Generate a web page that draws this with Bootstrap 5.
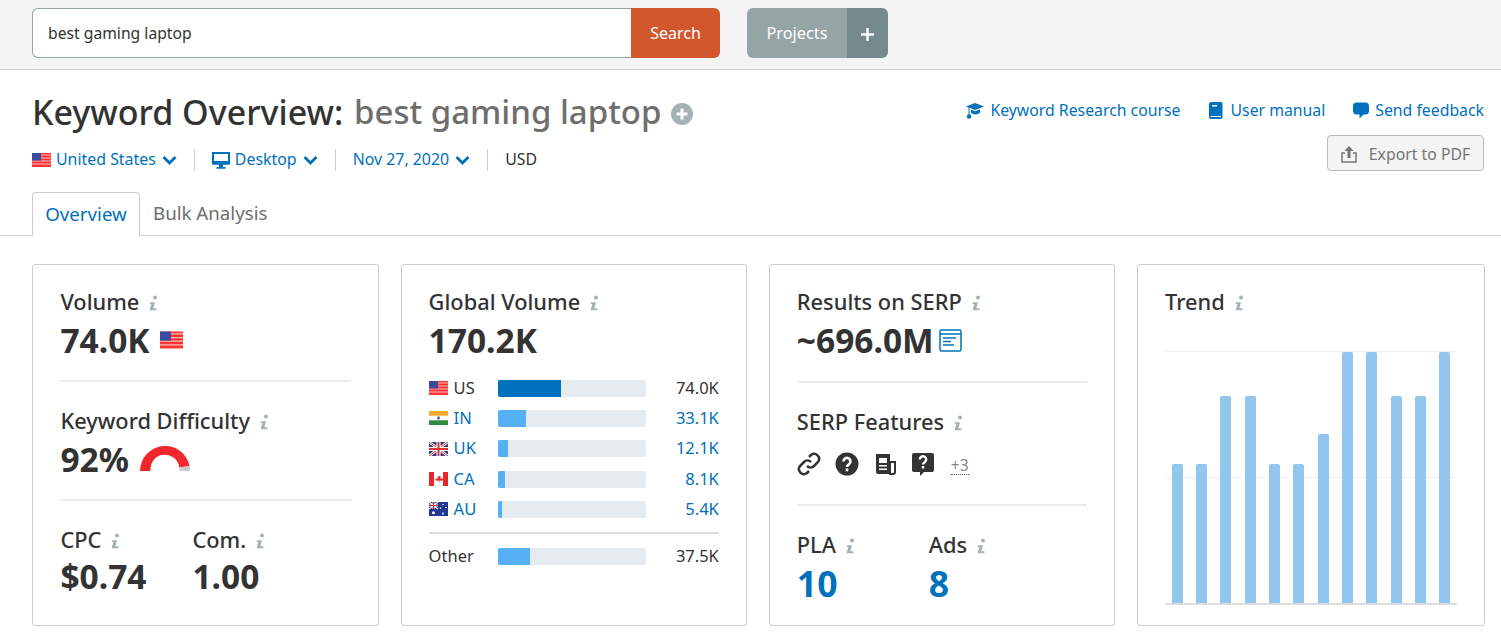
<!DOCTYPE html>
<html lang="en"><head><meta charset="utf-8"><title>Keyword Overview</title>
<link href="https://cdn.jsdelivr.net/npm/bootstrap@5.3.0/dist/css/bootstrap.min.css" rel="stylesheet">
<style>
body{font-family:"Noto Sans",sans-serif;color:#333;background:#fff;overflow:hidden;font-size:16px}
a{color:#0071bc;text-decoration:none}
.topbar{height:70px;background:#f4f4f4;border-bottom:1px solid #ccc;padding:8px 32px}
.searchbox{width:688px;height:50px}
.searchbox .search-in{width:599px;height:50px;border:1px solid #95a5a6;border-right:0;border-radius:6px 0 0 6px;padding:0 15px;font-size:15.7px;color:#333;background:#fff;line-height:48px}
.searchbox .search-go{width:89px;height:50px;background:#d2572c;color:#fff;border:0;border-radius:0 6px 6px 0;font-size:16px;padding:0}
.proj{margin-left:27px;height:50px}
.proj-a{width:100px;height:50px;background:#95a5a6;color:#fff;border:0;border-radius:6px 0 0 6px;font-size:16.3px;padding:0}
.proj-b{width:41px;height:50px;background:#748a8f;border:0;border-radius:0 6px 6px 0;padding:0}
.headwrap{padding:0 17px 0 32px;height:122px}
.pagetitle{font-size:34px;font-weight:500;line-height:40px;margin:22px 0 0;white-space:nowrap;color:#333}
.pagetitle .kw{color:#6e6e6e;margin-left:2px;font-size:33px}
.pagetitle svg{margin:4px 0 0 10px}
.filters{margin-top:16px;height:24px;font-size:15.9px}
.filters .sep{width:1px;height:22px;background:#ccc;margin:0 17px}
.filters .chv{margin-left:6px}
.filters .lead-ico{margin-right:5px}
.toplinks{padding-top:29px;font-size:15.8px;gap:28px;line-height:22px}
.toplinks a{gap:6px}
.toplinks a.wide{gap:8px}
.exportbtn{margin-top:14px;height:36px;width:157px;background:#f4f4f4;border:1px solid #b5bcbd;border-radius:4px;color:#757575;font-size:15.8px;line-height:36px;padding:1px 0 0}
.tabstrip{height:44px;border-bottom:1px solid #ccc;padding-left:32px}
.tabon{height:44px;width:108px;border:1px solid #ccc;border-bottom:0;border-radius:4px 4px 0 0;background:#fff;color:#0071bc;font-size:18.7px;line-height:41px;text-align:center}
.taboff{font-size:18.7px;color:#6e6e6e;line-height:41px;margin-left:13px}
.cardgrid{display:grid;grid-template-columns:repeat(4,1fr);gap:22px;padding:28px 16px 0 32.4px}
.metric{height:362px;border:1px solid #ccc;border-radius:3px;padding:25px 27px 0;background:#fff}
.mlabel{font-size:21.8px;line-height:24px;font-weight:500;color:#333;white-space:nowrap}
.mvalue{font-size:33.5px;line-height:40px;margin-top:6px;font-weight:700;color:#333;white-space:nowrap}
.mvalue.tight{margin-top:4px}
.hrule{height:2px;background:#e9edee;margin-top:20px}
.hrule.first{margin-top:21px}
.hrule.serp{margin-top:28px}
.afterrule{margin-top:27px}
.inf{width:9px;height:16px;margin-left:10px;vertical-align:-1px}
.flagbig{margin-left:10px}
.pagegauge{margin:0 0 8px 11px}
.serpico{margin-left:5px}
.cty{height:30.3px;font-size:16.5px}
.ctylist{margin-top:13px}
.cty .flg{width:19px;height:14px;margin-right:6px;flex:none}
.cty .cc{width:44px}
.cty .othr{width:69px}
.barbg{width:148px;height:17px;background:#e5ebee;border-radius:2px;overflow:hidden;flex:none}
.barfg{height:100%;background:#55b1f3}
.barfg.dark{background:#0071bc}
.num{flex:1;text-align:right}
.otherrule{height:2px;background:#ddd;margin:8px 0 7px}
.trendbox{height:254px;margin-top:37px;border-top:1px solid #f0f0f0;border-bottom:2px solid #ddd;background:linear-gradient(#eee,#eee) 0 50%/100% 1px no-repeat}
.tcol{width:24.33px;flex:none;display:flex;justify-content:center;align-items:flex-end;height:100%}
.tbar{width:11px;background:#92c6ee;border-radius:2px 2px 0 0}
.iconrow{margin-top:18px;gap:14px}
.plus3{font-size:15.5px;color:#8a8a8a;border-bottom:1px dotted #555;line-height:17px;margin:4px 0 0 2px}
.sico{width:24px;height:24px}
.bignum{font-size:35.5px;line-height:40px;margin-top:6px;font-weight:700;color:#0071bc}
.halfcol{width:132px}
</style></head><body>
<svg width="0" height="0" class="d-block"><defs>
<symbol id="i" viewBox="0 0 9 16"><circle cx="6" cy="2.5" r="2" fill="#a5b2b5"/><path d="M1 7.2h5l-1.6 6h3v2H.6l1.700-6.200H.6z" fill="#a5b2b5"/></symbol>
<symbol id="us" viewBox="0 0 19 14"><rect width="19" height="14" fill="#f33"/><path d="M0 2h19M0 5h19M0 8h19M0 11h19" stroke="#fbb" stroke-width="1"/><rect width="9" height="7.5" fill="#3b4b9e"/></symbol>
<symbol id="in" viewBox="0 0 19 14"><rect width="19" height="14" fill="#fff"/><rect width="19" height="4.7" fill="#f6a72d"/><rect y="9.3" width="19" height="4.7" fill="#2c8a3c"/><circle cx="9.5" cy="7" r="1.7" fill="#5a7fb0"/></symbol>
<symbol id="uk" viewBox="0 0 19 14"><rect width="19" height="14" fill="#2d3f86"/><path d="M0 0l19 14M19 0L0 14" stroke="#fff" stroke-width="2.6"/><path d="M0 0l19 14M19 0L0 14" stroke="#d33" stroke-width="1"/><path d="M9.5 0v14M0 7h19" stroke="#fff" stroke-width="4"/><path d="M9.5 0v14M0 7h19" stroke="#d33" stroke-width="2"/></symbol>
<symbol id="ca" viewBox="0 0 19 14"><rect width="19" height="14" fill="#fff"/><rect width="5" height="14" fill="#e8262b"/><rect x="14" width="5" height="14" fill="#e8262b"/><path d="M9.5 2.500l1 2 1.200-.5-.4 2.500 1.400-.6.3 1 1.300-.2-.9 2-3-.3.1 2h-.6l.1-2-3 .3-.9-2 1.300.2.3-1 1.400.6-.4-2.500 1.200.5z" fill="#e8262b"/></symbol>
<symbol id="au" viewBox="0 0 19 14"><rect width="19" height="14" fill="#1d3a8f"/><path d="M0 0l9 7M9 0L0 7" stroke="#fff" stroke-width="1.2"/><path d="M4.5 0v7M0 3.500h9" stroke="#fff" stroke-width="2"/><path d="M4.5 0v7M0 3.500h9" stroke="#d33" stroke-width="1"/><g fill="#fff"><circle cx="4.5" cy="10.8" r="1.5"/><circle cx="14" cy="2.5" r=".8"/><circle cx="14" cy="11.5" r=".9"/><circle cx="11.5" cy="6" r=".8"/><circle cx="17" cy="5.5" r=".8"/></g></symbol>
<symbol id="chev" viewBox="0 0 15 10"><path d="M1.5 2l6 6 6-6" fill="none" stroke="#0071bc" stroke-width="2.8"/></symbol>
</defs></svg>

<header class="topbar d-flex align-items-start">
  <div class="searchbox d-flex"><div class="search-in">best gaming laptop</div><button class="search-go">Search</button></div>
  <div class="proj d-flex"><button class="proj-a">Projects</button><button class="proj-b" aria-label="Add"><svg width="13" height="13" viewBox="0 0 13 13"><path d="M6.5 0v13M0 6.500h13" stroke="#fff" stroke-width="2.4"/></svg></button></div>
</header>

<section class="headwrap d-flex justify-content-between">
  <div>
    <h1 class="pagetitle d-flex align-items-center">Keyword Overview:&nbsp;<span class="kw">best gaming laptop</span>
      <svg width="22" height="22" viewBox="0 0 22 22"><circle cx="11" cy="11" r="11" fill="#a5b2b5"/><path d="M11 5.500v11M5.500 11h11" stroke="#fff" stroke-width="3"/></svg></h1>
    <div class="filters d-flex align-items-center">
      <svg width="19" height="14" class="lead-ico"><use href="#us"/></svg><a href="#">United States</a><svg width="15" height="10" class="chv"><use href="#chev"/></svg><span class="sep"></span>
      <svg width="18" height="17" viewBox="0 0 18 17" class="lead-ico"><path d="M1 1h16v10.500H1z" fill="none" stroke="#0071bc" stroke-width="2"/><path d="M1 9h16v3.500H1zM7 12h4v3h2.500v1.800h-9V15H7z" fill="#0071bc"/></svg><a href="#">Desktop</a><svg width="15" height="10" class="chv"><use href="#chev"/></svg><span class="sep"></span>
      <a href="#">Nov 27, 2020</a><svg width="15" height="10" class="chv"><use href="#chev"/></svg><span class="sep"></span>
      <span>USD</span>
    </div>
  </div>
  <div class="d-flex flex-column align-items-end">
    <div class="toplinks d-flex">
      <a href="#" class="d-flex align-items-center"><svg width="18" height="17" viewBox="0 0 18 17"><path d="M9 1l9 3.500L9 8 3.500 5.800V13H2.500V5.400L0 4.500z" fill="#0071bc"/><path d="M5 7.500l4 1.800 5-2v3.500c-3 2.300-6 2.300-9 0z" fill="#0071bc"/><circle cx="3" cy="14.500" r="2.200" fill="#0071bc"/></svg>Keyword Research course</a>
      <a href="#" class="d-flex align-items-center wide"><svg width="14" height="17" viewBox="0 0 14 17"><path d="M2 0h10a1.500 1.500 0 0 1 1.500 1.500V15a2 2 0 0 1-2 2H2a2 2 0 0 1-2-2V2a2 2 0 0 1 2-2z" fill="#0071bc"/><path d="M3 3h5v1.500H3z" fill="#fff"/><path d="M1.500 14.500h10.500" stroke="#fff" stroke-width="1"/></svg>User manual</a>
      <a href="#" class="d-flex align-items-center"><svg width="16" height="17" viewBox="0 0 16 17"><path d="M4 .5h8A3.700 3.700 0 0 1 16 4v5a3.700 3.700 0 0 1-4 3.500h-1.500L6.500 16.500v-4H4A3.700 3.700 0 0 1 0 9V4A3.700 3.700 0 0 1 4 .5z" fill="#0071bc"/></svg>Send feedback</a>
    </div>
    <button class="exportbtn d-flex align-items-center justify-content-center gap-2"><svg width="16" height="18" viewBox="0 0 16 18"><path d="M4 8H1v9h14V8h-3" fill="none" stroke="#757575" stroke-width="1.500"/><path d="M8 1L3.500 6h3v7h3V6h3z" fill="#757575"/></svg><span class="ms-1">Export to PDF</span></button>
  </div>
</section>

<nav class="tabstrip d-flex"><div class="tabon">Overview</div><div class="taboff">Bulk Analysis</div></nav>

<main class="cardgrid">
  <article class="metric">
    <div class="mlabel">Volume<svg class="inf"><use href="#i"/></svg></div>
    <div class="mvalue d-flex align-items-center">74.0K<svg width="23" height="18" class="flagbig"><use href="#us"/></svg></div>
    <div class="hrule"></div>
    <div class="mlabel afterrule">Keyword Difficulty<svg class="inf"><use href="#i"/></svg></div>
    <div class="mvalue d-flex align-items-end">92%<svg width="50" height="25" viewBox="0 0 50 25" class="pagegauge"><path d="M0 25A25 25 0 0 1 49.500 20L39.300 21.500A14.500 14.500 0 0 0 10.500 25z" fill="#f0282d"/><path d="M49.500 20A25 25 0 0 1 50 25H39.500A14.500 14.500 0 0 0 39.300 21.500z" fill="#ccc"/></svg></div>
    <div class="hrule"></div>
    <div class="d-flex afterrule">
      <div class="halfcol"><div class="mlabel">CPC<svg class="inf"><use href="#i"/></svg></div><div class="mvalue tight">$0.74</div></div>
      <div><div class="mlabel">Com.<svg class="inf"><use href="#i"/></svg></div><div class="mvalue tight">1.00</div></div>
    </div>
  </article>

  <article class="metric">
    <div class="mlabel">Global Volume<svg class="inf"><use href="#i"/></svg></div>
    <div class="mvalue">170.2K</div>
    <div class="ctylist">
    <div class="cty d-flex align-items-center"><svg class="flg"><use href="#us"/></svg><span class="cc">US</span><span class="barbg d-block"><span class="barfg dark d-block" style="width:43%"></span></span><span class="num">74.0K</span></div>
    <div class="cty d-flex align-items-center"><svg class="flg"><use href="#in"/></svg><a class="cc" href="#">IN</a><span class="barbg d-block"><span class="barfg d-block" style="width:19.5%"></span></span><a class="num" href="#">33.1K</a></div>
    <div class="cty d-flex align-items-center"><svg class="flg"><use href="#uk"/></svg><a class="cc" href="#">UK</a><span class="barbg d-block"><span class="barfg d-block" style="width:7%"></span></span><a class="num" href="#">12.1K</a></div>
    <div class="cty d-flex align-items-center"><svg class="flg"><use href="#ca"/></svg><a class="cc" href="#">CA</a><span class="barbg d-block"><span class="barfg d-block" style="width:4.7%"></span></span><a class="num" href="#">8.1K</a></div>
    <div class="cty d-flex align-items-center"><svg class="flg"><use href="#au"/></svg><a class="cc" href="#">AU</a><span class="barbg d-block"><span class="barfg d-block" style="width:2.7%"></span></span><a class="num" href="#">5.4K</a></div>
    </div>
    <div class="otherrule"></div>
    <div class="cty d-flex align-items-center"><span class="othr">Other</span><span class="barbg d-block"><span class="barfg d-block" style="width:21.6%"></span></span><span class="num">37.5K</span></div>
  </article>

  <article class="metric">
    <div class="mlabel">Results on SERP<svg class="inf"><use href="#i"/></svg></div>
    <div class="mvalue d-flex align-items-center">~696.0M<svg width="23" height="23" viewBox="0 0 23 23" class="serpico"><rect x="1" y="1" width="21" height="21" rx="1.500" fill="none" stroke="#0071bc" stroke-width="1.500"/><path d="M1 5h21M4 9h13M4 12.500h8M4 16h11" stroke="#0071bc" stroke-width="1.500"/></svg></div>
    <div class="hrule first"></div>
    <div class="mlabel afterrule">SERP Features<svg class="inf"><use href="#i"/></svg></div>
    <div class="d-flex align-items-center iconrow">
      <svg class="sico" viewBox="0 0 24 24"><path d="M10 14a5 5 0 0 0 7 0l4-4a5 5 0 0 0-7-7l-2 2M14 10a5 5 0 0 0-7 0l-4 4a5 5 0 0 0 7 7l2-2" fill="none" stroke="#333" stroke-width="2.500"/></svg>
      <svg class="sico" viewBox="0 0 24 24"><circle cx="12" cy="12" r="11.500" fill="#333"/><path d="M8.500 9.500a3.500 3.500 0 1 1 5.500 2.800c-1.200.9-2 1.300-2 2.700" fill="none" stroke="#fff" stroke-width="2.600"/><rect x="10.700" y="16.500" width="2.600" height="2.800" fill="#fff"/></svg>
      <svg class="sico" viewBox="0 0 24 24"><path d="M3 2h14v20H5a2 2 0 0 1-2-2z" fill="#333"/><path d="M17 10h5v10a2 2 0 0 1-2 2h-3z" fill="none" stroke="#333" stroke-width="2"/><path d="M6 6h8v5H6zM6 13h8v1.500H6zM6 16.500h8V18H6z" fill="#fff"/></svg>
      <svg class="sico" viewBox="0 0 24 24"><path d="M3 1h18a2 2 0 0 1 2 2v15a2 2 0 0 1-2 2h-8l-4 4v-4H3a2 2 0 0 1-2-2V3a2 2 0 0 1 2-2z" fill="#333"/><path d="M8.800 7.500a3.200 3.200 0 1 1 5 2.600c-1 .8-1.800 1.200-1.800 2.400" fill="none" stroke="#fff" stroke-width="2.400"/><rect x="10.800" y="14" width="2.400" height="2.500" fill="#fff"/></svg>
      <span class="plus3">+3</span>
    </div>
    <div class="hrule serp"></div>
    <div class="d-flex afterrule">
      <div class="halfcol"><div class="mlabel">PLA<svg class="inf"><use href="#i"/></svg></div><div class="bignum">10</div></div>
      <div><div class="mlabel">Ads<svg class="inf"><use href="#i"/></svg></div><div class="bignum">8</div></div>
    </div>
  </article>

  <article class="metric">
    <div class="mlabel">Trend<svg class="inf"><use href="#i"/></svg></div>
    <div class="trendbox d-flex">
      <div class="tcol"><div class="tbar" style="height:55.5%"></div></div>
      <div class="tcol"><div class="tbar" style="height:55.5%"></div></div>
      <div class="tcol"><div class="tbar" style="height:82.5%"></div></div>
      <div class="tcol"><div class="tbar" style="height:82.5%"></div></div>
      <div class="tcol"><div class="tbar" style="height:55.5%"></div></div>
      <div class="tcol"><div class="tbar" style="height:55.5%"></div></div>
      <div class="tcol"><div class="tbar" style="height:67.5%"></div></div>
      <div class="tcol"><div class="tbar" style="height:100%"></div></div>
      <div class="tcol"><div class="tbar" style="height:100%"></div></div>
      <div class="tcol"><div class="tbar" style="height:82.5%"></div></div>
      <div class="tcol"><div class="tbar" style="height:82.5%"></div></div>
      <div class="tcol"><div class="tbar" style="height:100%"></div></div>
    </div>
  </article>
</main>
<script src="https://cdn.jsdelivr.net/npm/bootstrap@5.3.0/dist/js/bootstrap.bundle.min.js"></script>
</body></html>
